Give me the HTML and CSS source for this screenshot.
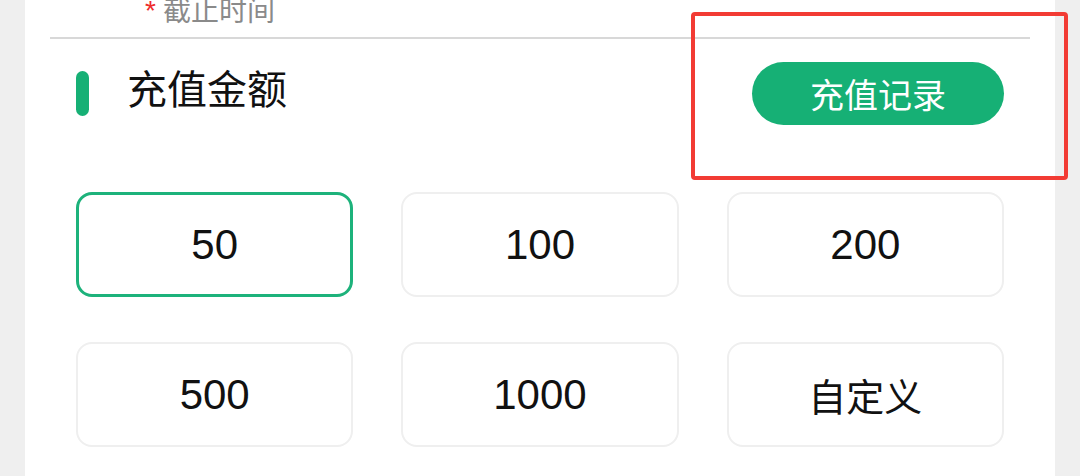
FILE: index.html
```html
<!DOCTYPE html>
<html lang="zh">
<head>
<meta charset="utf-8">
<link rel="stylesheet" href="styles.css">
</head>
<body>
<div class="card">
  <div class="field"><span class="req">*</span><span class="label">截止时间</span></div>
  <div class="divider"></div>
  <div class="section">
    <div class="header">
      <span class="bar"></span>
      <span class="title">充值金额</span>
      <button class="record">充值记录</button>
    </div>
    <div class="grid">
      <div class="opt active">50</div>
      <div class="opt">100</div>
      <div class="opt">200</div>
      <div class="opt">500</div>
      <div class="opt">1000</div>
      <div class="opt cjk">自定义</div>
    </div>
  </div>
</div>
<div class="annot"></div>
</body>
</html>
```
FILE: styles.css
```css
html, body {
  margin: 0;
  padding: 0;
}
body {
  background: #efefef;
  width: 1080px;
  height: 476px;
  overflow: hidden;
  position: relative;
  font-family: "Noto Sans CJK SC", "Liberation Sans", sans-serif;
}
.card {
  margin: 0 25px;
  height: 476px;
  background: #fff;
  padding: 0 25px;
  box-sizing: border-box;
}
.field {
  height: 37px;
  display: flex;
  align-items: flex-end;
  padding-left: 95px;
  box-sizing: border-box;
  padding-bottom: 14px;
}
.field .req {
  color: #ee2b2b;
  font-family: "Liberation Sans", sans-serif;
  font-size: 28px;
  line-height: 1;
  margin-right: 7px;
  position: relative;
  top: 2px;
}
.field .label {
  color: #8a8a8a;
  font-size: 28px;
  line-height: 1;
}
.divider {
  height: 2px;
  background: #d8d8d8;
}
.section {
  padding: 0 26px;
}
.header {
  display: flex;
  align-items: center;
  padding-top: 23px;
}
.bar {
  width: 13px;
  height: 45px;
  border-radius: 6.5px;
  background: #16b075;
  margin-right: 38px;
}
.title {
  font-size: 40px;
  color: #111;
  line-height: 1;
  position: relative;
  top: -7px;
}
.record {
  margin-left: auto;
  height: 63px;
  width: 252px;
  border: none;
  border-radius: 32px;
  background: #16b075;
  color: #fff;
  font-family: "Noto Sans CJK SC", sans-serif;
  font-size: 34px;
  padding: 0;
  line-height: 1;
}
.grid {
  margin-top: 67px;
  display: grid;
  grid-template-columns: repeat(3, 1fr);
  column-gap: 48px;
  row-gap: 45px;
}
.opt {
  height: 105px;
  box-sizing: border-box;
  border: 2px solid #efefef;
  border-radius: 16px;
  display: flex;
  align-items: center;
  justify-content: center;
  font-family: "Liberation Sans", sans-serif;
  font-size: 42px;
  color: #111;
}
.opt.cjk {
  font-family: "Noto Sans CJK SC", sans-serif;
  font-size: 38px;
}
.opt.active {
  border: 3px solid #1db27b;
}
.annot {
  position: absolute;
  left: 691px;
  top: 12px;
  width: 377px;
  height: 168px;
  box-sizing: border-box;
  border: 4px solid #f23b34;
  border-radius: 4px;
}
```
